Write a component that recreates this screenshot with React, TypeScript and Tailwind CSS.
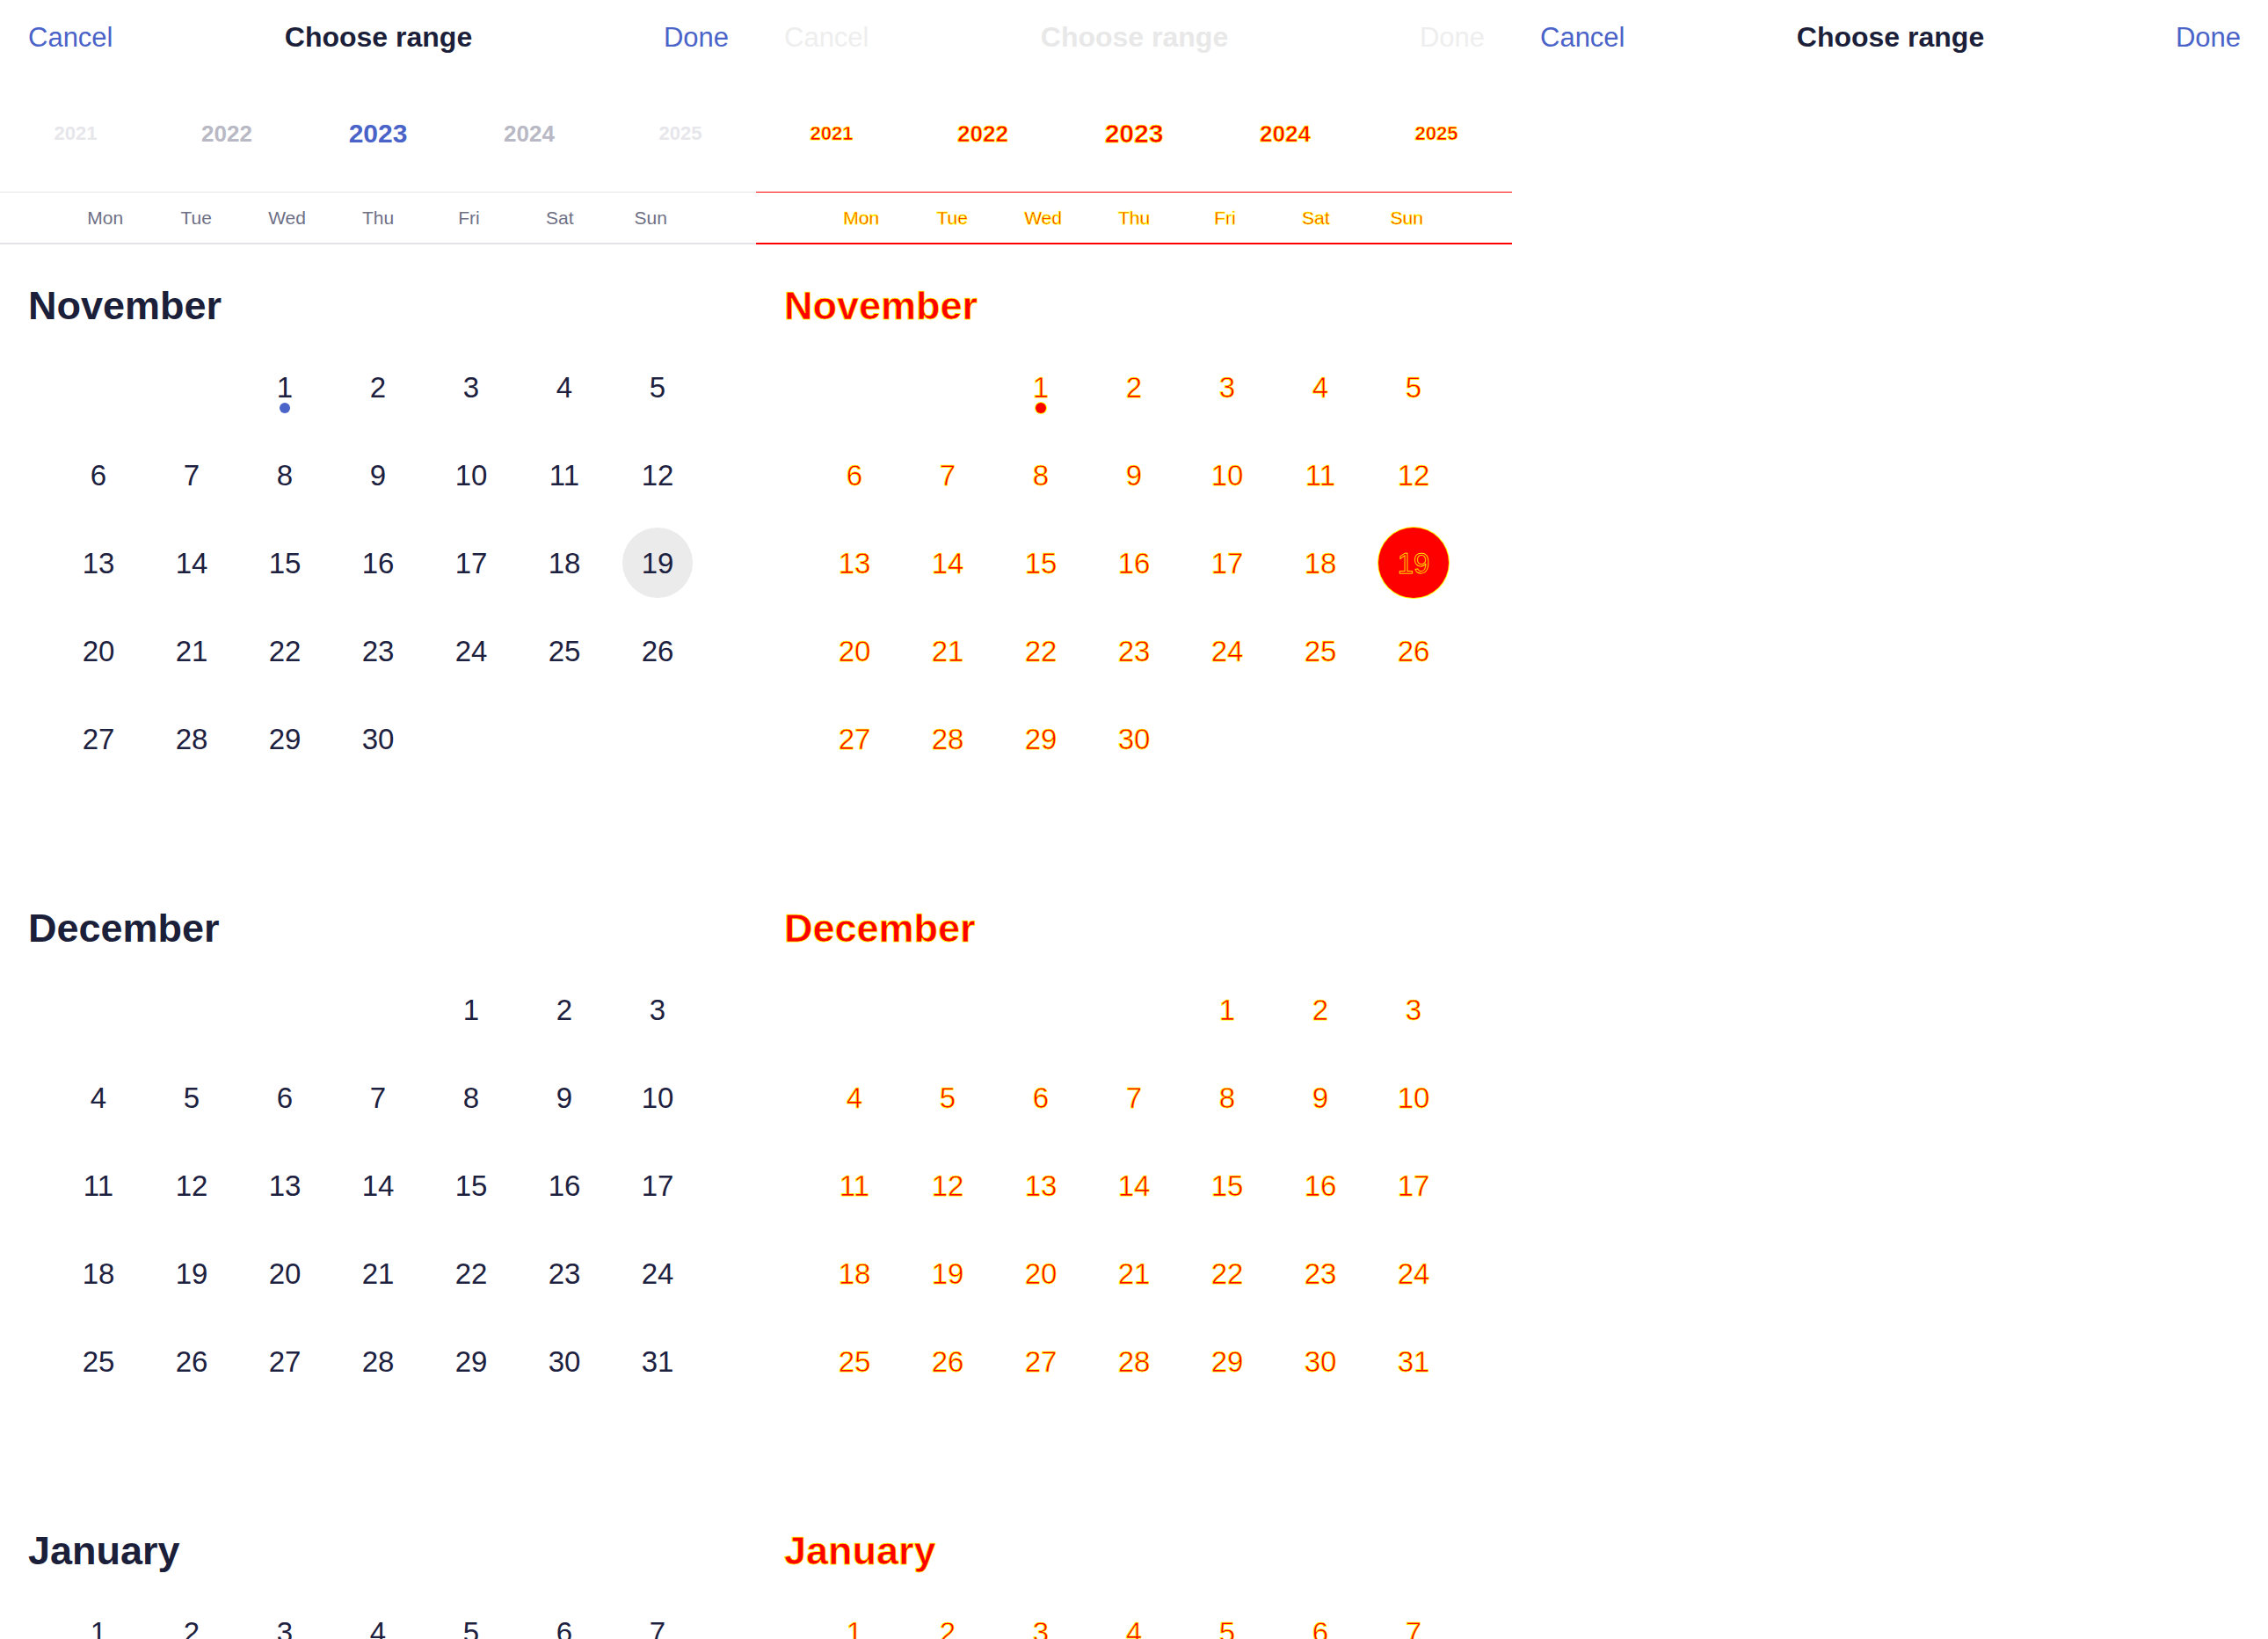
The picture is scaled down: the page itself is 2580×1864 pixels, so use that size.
import React from 'react';
import clsx from 'clsx';

type Mode = 'base' | 'diff' | 'empty';

const YEARS = [
  { year: 2021, size: 'text-[22px]', color: 'text-[#e6e6eb]' },
  { year: 2022, size: 'text-[26px]', color: 'text-[#b9b9c6]' },
  { year: 2023, size: 'text-[30px]', color: 'text-[#4a63c8]' },
  { year: 2024, size: 'text-[26px]', color: 'text-[#b9b9c6]' },
  { year: 2025, size: 'text-[22px]', color: 'text-[#e6e6eb]' },
];

const WEEKDAYS = ['Mon', 'Tue', 'Wed', 'Thu', 'Fri', 'Sat', 'Sun'];

const MONTHS = [
  { name: 'November', offset: 2, days: 30 },
  { name: 'December', offset: 4, days: 31 },
  { name: 'January', offset: 0, days: 31 },
];

// diff view: changed pixels in red, anti-aliased edges in yellow
const DIFF_TEXT = 'text-[#ff0000] [-webkit-text-stroke:0.75px_#ffff00]';

function Header({ mode }: { mode: Mode }) {
  const faded = mode === 'diff';
  return (
    <div className="grid h-[84px] shrink-0 grid-cols-[1fr_auto_1fr] items-center pl-[32px] pr-[31px] leading-none">
      <button className={clsx('justify-self-start text-[31px]', faded ? 'text-[#eeeeee]' : 'text-[#4a63c8]')}>
        Cancel
      </button>
      <h1 className={clsx('text-[32px] font-bold', faded ? 'text-[#e8e8e8]' : 'text-[#1c1f3a]')}>Choose range</h1>
      <button className={clsx('justify-self-end text-[31px]', faded ? 'text-[#eeeeee]' : 'text-[#4a63c8]')}>
        Done
      </button>
    </div>
  );
}

function YearPicker({ diff }: { diff: boolean }) {
  return (
    <div className="grid h-[134px] shrink-0 grid-cols-5 items-center pt-[2px] text-center font-bold leading-none">
      {YEARS.map((y) => (
        <span key={y.year} className={clsx(y.size, diff ? DIFF_TEXT : y.color)}>
          {y.year}
        </span>
      ))}
    </div>
  );
}

function WeekdayRow({ diff }: { diff: boolean }) {
  return (
    <div
      className={clsx(
        'grid h-[60px] shrink-0 grid-cols-7 items-center border-t border-b-2 px-[68px] text-center text-[21px] leading-none',
        diff ? 'border-[#ff0000]' : 'border-t-[#e6e6ea] border-b-[#e3e3e8]'
      )}
    >
      {WEEKDAYS.map((d) => (
        <span key={d} className={diff ? DIFF_TEXT : 'text-[#6e7085]'}>
          {d}
        </span>
      ))}
    </div>
  );
}

function Month({ name, offset, days, diff }: { name: string; offset: number; days: number; diff: boolean }) {
  const cells: (number | null)[] = [];
  for (let i = 0; i < 42; i++) {
    const d = i - offset + 1;
    cells.push(d >= 1 && d <= days ? d : null);
  }

  return (
    <section className="mb-[43px]">
      <h2 className={clsx('h-[44px] pl-[32px] text-[45px] font-bold leading-none', diff ? DIFF_TEXT : 'text-[#1c1f3a]')}>
        {name}
      </h2>
      <div className="mt-[21px] grid auto-rows-[100px] grid-cols-7 px-[59px]">
        {cells.map((day, i) => {
          const selected = name === 'November' && day === 19;
          const today = name === 'November' && day === 1;
          return (
            <div key={i} className="relative flex items-center justify-center">
              {day && (
                <span
                  className={clsx(
                    'flex h-[80px] w-[80px] items-center justify-center rounded-full text-[33px] leading-none',
                    diff ? DIFF_TEXT : 'text-[#1d2140]',
                    selected && (diff ? 'bg-[#ff0000] shadow-[0_0_0_1px_#ffff00]' : 'bg-[#ebebeb]')
                  )}
                >
                  {day}
                </span>
              )}
              {today && (
                <span
                  className={clsx(
                    'absolute left-1/2 top-[68px] h-[12px] w-[12px] -translate-x-1/2 rounded-full',
                    diff ? 'bg-[#ff0000] shadow-[0_0_0_1px_#ffff00]' : 'bg-[#4a63c8]'
                  )}
                />
              )}
            </div>
          );
        })}
      </div>
    </section>
  );
}

function Panel({ mode }: { mode: Mode }) {
  const diff = mode === 'diff';
  return (
    <div className="flex h-full w-[860px] shrink-0 flex-col overflow-hidden bg-white">
      <Header mode={mode} />
      {mode !== 'empty' && (
        <>
          <YearPicker diff={diff} />
          <WeekdayRow diff={diff} />
          <div className="shrink-0 pt-[47px]">
            {MONTHS.map((m) => (
              <Month key={m.name} {...m} diff={diff} />
            ))}
          </div>
        </>
      )}
    </div>
  );
}

export default function App() {
  return (
    <div className="flex h-[1864px] w-[2580px] overflow-hidden bg-white font-['Liberation_Sans',Arial,sans-serif]">
      <Panel mode="base" />
      <Panel mode="diff" />
      <Panel mode="empty" />
    </div>
  );
}
